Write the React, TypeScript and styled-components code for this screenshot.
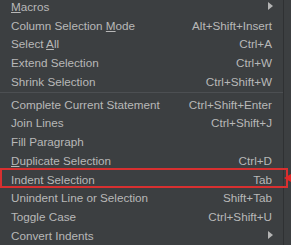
import React from 'react'
import styled, { createGlobalStyle } from 'styled-components'

const GlobalStyle = createGlobalStyle`
  html, body {
    margin: 0;
    padding: 0;
    background: #3c3f41;
    width: 291px;
    height: 245px;
    overflow: hidden;
  }
`

const Screen = styled.div`
  position: relative;
  width: 291px;
  height: 245px;
  background: #3c3f41;
  overflow: hidden;
`

const Menu = styled.div`
  width: 283px;
  margin-top: -3px;
  border-right: 1px solid #2f3133;
  font-family: 'Liberation Sans', Arial, sans-serif;
  font-size: 11.7px;
  color: #b8b8b8;
`

const Row = styled.div`
  display: flex;
  align-items: center;
  height: 18.75px;
  padding: 0 11px 0 11px;
  white-space: nowrap;
`

const Label = styled.span`
  flex: 1;
`

const Shortcut = styled.span`
  text-align: right;
`

const Arrow = styled.span`
  width: 0;
  height: 0;
  margin-right: -1px;
  border-top: 4px solid transparent;
  border-bottom: 4px solid transparent;
  border-left: 5px solid #b4b4b4;
`

const Separator = styled.div`
  height: 4px;
  display: flex;
  align-items: center;

  &::after {
    content: '';
    flex: 1;
    height: 1px;
    background: #4c4f52;
  }
`

const Mn = styled.u`
  text-decoration: underline;
  text-underline-offset: 1px;
`

const Highlight = styled.div`
  position: absolute;
  left: 0;
  top: 168px;
  width: 288px;
  height: 20px;
  box-sizing: border-box;
  border: 2px solid #d83030;
`

const Pointer = styled.div`
  position: absolute;
  left: 284px;
  top: 174px;
  width: 0;
  height: 0;
  border-top: 4px solid transparent;
  border-bottom: 4px solid transparent;
  border-right: 7px solid #e02828;
`

type Item = {
  label: React.ReactNode
  shortcut?: string
  submenu?: boolean
}

const top: Item[] = [
  { label: <><Mn>M</Mn>acros</>, submenu: true },
  { label: <>Column Selection <Mn>M</Mn>ode</>, shortcut: 'Alt+Shift+Insert' },
  { label: <>Select <Mn>A</Mn>ll</>, shortcut: 'Ctrl+A' },
  { label: 'Extend Selection', shortcut: 'Ctrl+W' },
  { label: 'Shrink Selection', shortcut: 'Ctrl+Shift+W' },
]

const bottom: Item[] = [
  { label: 'Complete Current Statement', shortcut: 'Ctrl+Shift+Enter' },
  { label: 'Join Lines', shortcut: 'Ctrl+Shift+J' },
  { label: 'Fill Paragraph' },
  { label: <><Mn>D</Mn>uplicate Selection</>, shortcut: 'Ctrl+D' },
  { label: 'Indent Selection', shortcut: 'Tab' },
  { label: 'Unindent Line or Selection', shortcut: 'Shift+Tab' },
  { label: 'Toggle Case', shortcut: 'Ctrl+Shift+U' },
  { label: 'Convert Indents', submenu: true },
]

const renderRow = (item: Item, i: number) => (
  <Row key={i}>
    <Label>{item.label}</Label>
    {item.shortcut && <Shortcut>{item.shortcut}</Shortcut>}
    {item.submenu && <Arrow />}
  </Row>
)

const App: React.FC = () => {
  return (
    <>
      <GlobalStyle />
      <Screen>
        <Menu>
          {top.map(renderRow)}
          <Separator />
          {bottom.map(renderRow)}
        </Menu>
        <Highlight />
        <Pointer />
      </Screen>
    </>
  )
}

export default App
